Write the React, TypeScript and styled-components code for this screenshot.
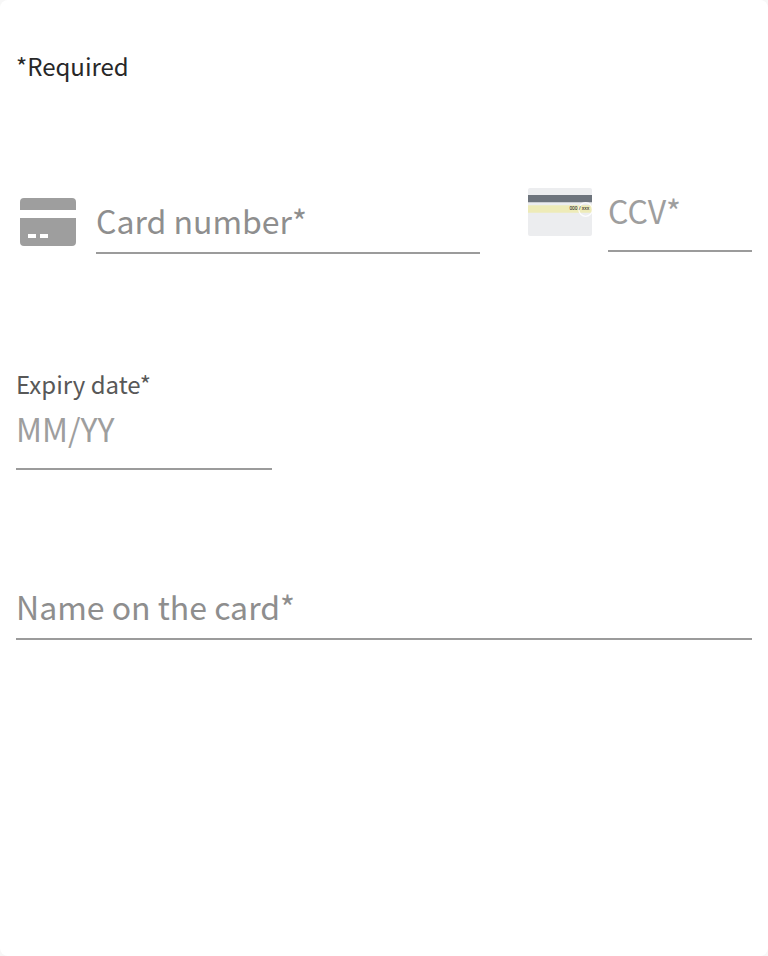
import React from "react";
import styled, { createGlobalStyle } from "styled-components";

const GlobalStyle = createGlobalStyle`
  * { box-sizing: border-box; }
  body { margin: 0; background: #f7f7f7; }
`;
const fontStack = `"Noto Sans CJK SC", "Noto Sans", sans-serif`;
const Card = styled.form`
  width: 768px;
  height: 956px;
  padding: 49px 16px 0;
  background: #fff;
  border-radius: 8px;
  font-family: ${fontStack};
`;
const Note = styled.p`
  margin: 0;
  height: 36px;
  font-size: 24px;
  line-height: 34px;
  color: #282828;
`;
const CardRow = styled.div`
  display: flex;
  align-items: flex-start;
  margin-top: 99px;
  height: 76px;
`;
const CardIcon = styled.svg`
  display: block;
  flex: none;
  margin: 14px 20px 0 4px;
`;
const CodeIcon = styled.svg`
  display: block;
  flex: none;
  margin: 4px 16px 0 48px;
`;
const Field = styled.label<{ $width: number; $height: number; $top?: number }>`
  display: block;
  width: ${(p) => p.$width}px;
  height: ${(p) => p.$height}px;
  margin-top: ${(p) => p.$top ?? 0}px;
  border-bottom: 2px solid #9b9b9b;
  font-size: 32px;
  line-height: 44px;
  white-space: nowrap;
`;
const FieldText = styled.span<{ $light?: boolean }>`
  display: block;
  color: ${(p) => (p.$light ? "#9e9e9e" : "#8e8e8e")};
`;
const Caption = styled.span`
  display: block;
  height: 38px;
  font-size: 24px;
  line-height: 32px;
  color: #585858;
`;

export default function App() {
  return (
    <>
      <GlobalStyle />
      <Card>
        <Note>*Required</Note>
        <CardRow>
          <CardIcon width="56" height="48" viewBox="0 0 56 48">
            <path fill="#9e9e9e" d="M0 12V4a4 4 0 0 1 4-4h48a4 4 0 0 1 4 4v8zM0 20h56v24a4 4 0 0 1-4 4H4a4 4 0 0 1-4-4z" />
            <path fill="#fff" d="M8 36h8v4H8zM20 36h8v4h-8z" />
          </CardIcon>
          <Field $width={384} $height={56} $top={14}><FieldText>Card number*</FieldText></Field>
          <CodeIcon width="64" height="48" viewBox="0 0 64 48">
            <rect width="64" height="48" rx="2" fill="#ecedef" />
            <path fill="#6d747c" d="M0 7h64v7.3H0z" />
            <path fill="#eeebb8" d="M0 17.3h64v7.4H0z" />
            <circle cx="57.6" cy="21.5" r="6.8" fill="none" stroke="#fff" strokeOpacity="0.85" strokeWidth="1.3" />
            <text x="41.4" y="22.2" fontSize="4.8" fontWeight="500" textLength="20" fontFamily="Noto Sans" fill="#333">000 / xxx</text>
          </CodeIcon>
          <Field $width={144} $height={64} $top={4}><FieldText $light>CCV*</FieldText></Field>
        </CardRow>
        <Field $width={256} $height={102} $top={108}>
          <Caption>Expiry date*</Caption>
          <FieldText $light>MM/YY</FieldText>
        </Field>
        <Field $width={736} $height={56} $top={114}><FieldText>Name on the card*</FieldText></Field>
      </Card>
    </>
  );
}
